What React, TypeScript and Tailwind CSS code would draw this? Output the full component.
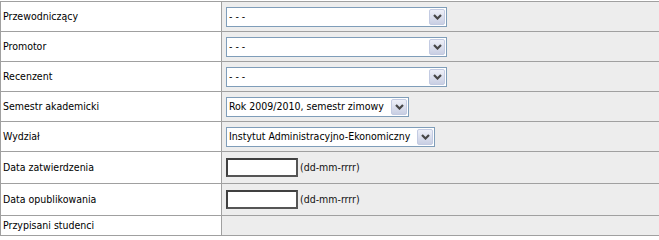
import React from 'react';

const font = { fontFamily: '"DejaVu Sans Condensed", "DejaVu Sans", Tahoma, sans-serif' };

const Chevron: React.FC = () => (
  <svg width="9" height="6" viewBox="0 0 9 6" className="block">
    <path d="M1 1 L4.5 4.5 L8 1" fill="none" stroke="#474747" strokeWidth="2.2" />
  </svg>
);

interface SelectBoxProps {
  value: string;
  width: string;
}

const SelectBox: React.FC<SelectBoxProps> = ({ value, width }) => (
  <div
    className={`flex items-stretch h-[20px] border border-[#7f9db9] bg-white ${width}`}
  >
    <div className="flex-1 min-w-0 flex items-center pl-[2px] text-[10.5px] text-black whitespace-nowrap overflow-hidden">
      {value}
    </div>
    <div className="w-[16px] m-px flex items-center justify-center rounded-[2px] border border-[#c3cbe2] bg-gradient-to-b from-[#eef0f8] to-[#c9cfe3]">
      <Chevron />
    </div>
  </div>
);

const DateField: React.FC = () => (
  <div className="flex items-center gap-[2px]">
    <div className="w-[72px] h-[19px] bg-white border-2 border-t-[#404040] border-l-[#404040] border-r-[#555555] border-b-[#555555]" />
    <span className="text-[10.5px] text-[#111]">(dd-mm-rrrr)</span>
  </div>
);

interface RowProps {
  label: string;
  height: string;
  children?: React.ReactNode;
}

const Row: React.FC<RowProps> = ({ label, height, children }) => (
  <div className={`flex border-b border-[#a0a0a0] ${height}`}>
    <div className="w-[222px] shrink-0 flex items-center pl-[2px] bg-white border-l border-r border-[#a0a0a0] text-[10.5px] text-black">
      {label}
    </div>
    <div className="flex-1 flex items-center pl-[4px] bg-[#ededed]">{children}</div>
  </div>
);

export default function App() {
  return (
    <div className="w-[659px] h-[236px] overflow-hidden bg-white pt-px" style={font}>
      <div className="border-t border-[#a0a0a0]">
        <Row label="Przewodniczący" height="h-[30px]">
          <SelectBox value="- - -" width="w-[221px]" />
        </Row>
        <Row label="Promotor" height="h-[30px]">
          <SelectBox value="- - -" width="w-[221px]" />
        </Row>
        <Row label="Recenzent" height="h-[30px]">
          <SelectBox value="- - -" width="w-[221px]" />
        </Row>
        <Row label="Semestr akademicki" height="h-[30px]">
          <SelectBox value="Rok 2009/2010, semestr zimowy" width="w-[183px]" />
        </Row>
        <Row label="Wydział" height="h-[30px]">
          <SelectBox value="Instytut Administracyjno-Ekonomiczny" width="w-[209px]" />
        </Row>
        <Row label="Data zatwierdzenia" height="h-[32px]">
          <DateField />
        </Row>
        <Row label="Data opublikowania" height="h-[32px]">
          <DateField />
        </Row>
        <Row label="Przypisani studenci" height="h-[20px]" />
      </div>
    </div>
  );
}
